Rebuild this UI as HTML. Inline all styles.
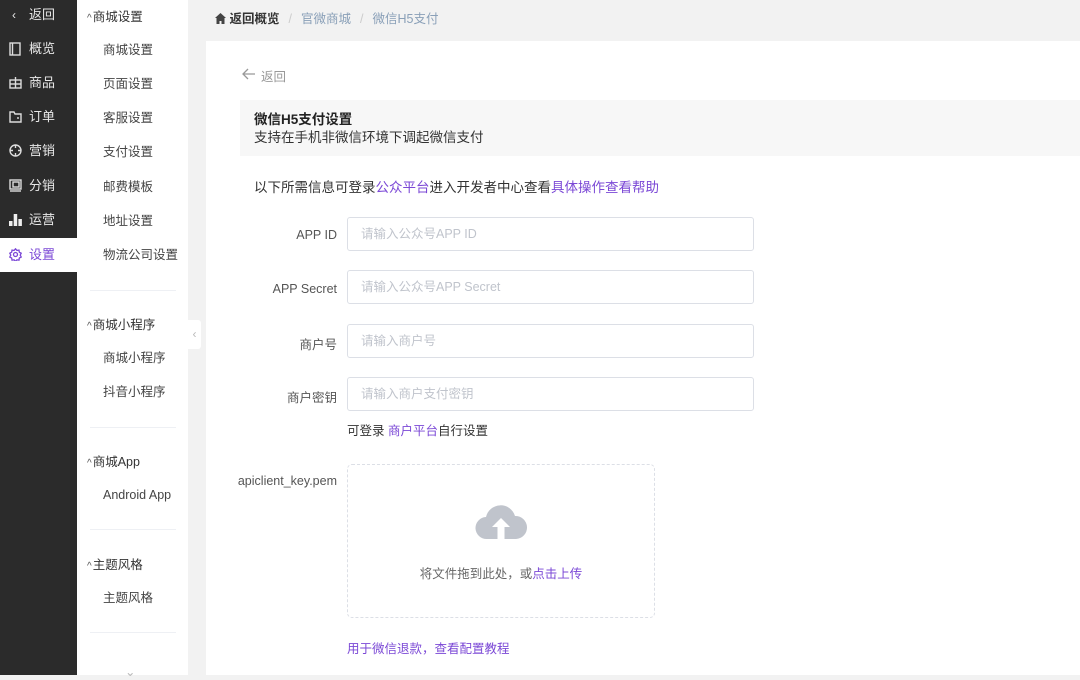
<!DOCTYPE html>
<html><head><meta charset="utf-8"><style>
*{box-sizing:border-box;margin:0;padding:0}
body{width:1080px;height:675px;overflow:hidden;background:#f2f2f2;font-family:"Liberation Sans","Noto Sans CJK SC",sans-serif;font-size:13px;color:#333;position:relative}
.abs{position:absolute}
.side{left:0;top:0;width:77px;height:675px;background:#2b2b2b}
.si{position:absolute;left:0;width:77px;height:34px;color:#e8e8e8;font-size:13px;line-height:34px;padding-left:29px}
.si svg{position:absolute;left:9px;top:10px}
.si.act{background:#fff;color:#7b48d6}
.sub{left:77px;top:0;width:111px;height:675px;background:#fff}
.sh{position:absolute;left:10px;font-size:12.5px;color:#333;line-height:16px}
.sh i{font-style:normal;font-size:10px;color:#555;margin-right:1px}
.sit{position:absolute;left:26px;font-size:12.5px;color:#444;line-height:16px}
.dv{position:absolute;left:13px;width:86px;height:1px;background:#eef0f4}
.purple{color:#7b48d6}
.card{left:206px;top:41px;width:874px;height:634px;background:#fff}
.lbl{position:absolute;right:743px;font-size:12.5px;color:#555;text-align:right}
.inp{position:absolute;left:347px;width:407px;height:34px;border:1px solid #dcdfe6;border-radius:3px;font-size:12.5px;color:#c0c4cc;line-height:32px;padding-left:13px}
</style></head><body>
<div class="abs side">
 <div class="si" style="top:-2px"><span class="abs" style="left:12px;top:0;font-size:12px">‹</span>返回</div>
 <div class="si" style="top:32px"><svg width="12" height="14" viewBox="0 0 12 14" fill="none" stroke="#ddd" stroke-width="1.4"><rect x="1" y="1" width="10" height="12"/><line x1="3.5" y1="1" x2="3.5" y2="13"/></svg>概览</div>
 <div class="si" style="top:66px"><svg width="13" height="13" viewBox="0 0 13 13" fill="none" stroke="#ddd" stroke-width="1.4"><rect x="1" y="4" width="11" height="8"/><line x1="6.5" y1="1" x2="6.5" y2="12"/><line x1="1" y1="8" x2="12" y2="8"/></svg>商品</div>
 <div class="si" style="top:100px"><svg width="13" height="13" viewBox="0 0 13 13" fill="none" stroke="#ddd" stroke-width="1.4"><path d="M1 2h4l1 2h6v8H1z"/><line x1="8" y1="8" x2="10" y2="8"/></svg>订单</div>
 <div class="si" style="top:134px"><svg width="13" height="13" viewBox="0 0 13 13" fill="none" stroke="#ddd" stroke-width="1.4"><circle cx="6.5" cy="6.5" r="5.5"/><path d="M6.5 1v3M6.5 9v3M1 6.5h3M9 6.5h3"/></svg>营销</div>
 <div class="si" style="top:169px"><svg width="13" height="13" viewBox="0 0 13 13" fill="none" stroke="#ddd" stroke-width="1.4"><rect x="1" y="1" width="11" height="9"/><rect x="4" y="3" width="6" height="5"/><path d="M1 12h11"/></svg>分销</div>
 <div class="si" style="top:203px"><svg width="13" height="13" viewBox="0 0 13 13" fill="#eee"><rect x="0" y="8" width="3.5" height="5"/><rect x="4.7" y="1" width="3.5" height="12"/><rect x="9.4" y="6" width="3.5" height="7"/></svg>运营</div>
 <div class="si act" style="top:238px"><svg width="13" height="13" viewBox="0 0 13 13" fill="none" stroke="#7b48d6" stroke-width="1.3"><circle cx="6.5" cy="6.5" r="2"/><path d="M6.5 .8l1.4 1.6 2.1-.3.3 2.1 1.9 1-1 1.9 1 1.9-1.9 1-.3 2.1-2.1-.3-1.4 1.6-1.4-1.6-2.1.3-.3-2.1-1.9-1 1-1.9-1-1.9 1.9-1 .3-2.1 2.1.3z"/></svg>设置</div>
</div>
<div class="abs sub">
 <div class="sh" style="top:9px"><i>^</i>商城设置</div>
 <div class="sit" style="top:42px">商城设置</div>
 <div class="sit" style="top:76px">页面设置</div>
 <div class="sit" style="top:110px">客服设置</div>
 <div class="sit" style="top:144px">支付设置</div>
 <div class="sit" style="top:179px">邮费模板</div>
 <div class="sit" style="top:213px">地址设置</div>
 <div class="sit" style="top:247px">物流公司设置</div>
 <div class="dv" style="top:290px"></div>
 <div class="sh" style="top:317px"><i>^</i>商城小程序</div>
 <div class="sit" style="top:350px">商城小程序</div>
 <div class="sit" style="top:384px">抖音小程序</div>
 <div class="dv" style="top:427px"></div>
 <div class="sh" style="top:454px"><i>^</i>商城App</div>
 <div class="sit" style="top:487px">Android App</div>
 <div class="dv" style="top:529px"></div>
 <div class="sh" style="top:557px"><i>^</i>主题风格</div>
 <div class="sit" style="top:590px">主题风格</div>
 <div class="dv" style="top:632px"></div>
 <div class="sit" style="top:664px;left:48px;color:#bbb">⌄</div>
</div>
<div class="abs" style="left:188px;top:320px;width:13px;height:29px;background:#fff;border-radius:0 3px 3px 0;color:#bbb;font-size:12px;line-height:29px;text-align:center">‹</div>
<div class="abs" style="left:215px;top:11px;font-size:12.5px;line-height:16px"><svg width="11" height="11" viewBox="0 0 11 11" style="vertical-align:-1px"><path d="M5.5 0L0 5h1.5v6h3V8h2v3h3V5H11z" fill="#444"/></svg> <b style="color:#333">返回概览</b><span style="color:#ccc;margin:0 9px">/</span><span style="color:#8aa0b8">官微商城</span><span style="color:#ccc;margin:0 9px">/</span><span style="color:#8aa0b8">微信H5支付</span></div>
<div class="abs card"></div>
<svg class="abs" style="left:242px;top:68px" width="13" height="12" viewBox="0 0 13 12" fill="none" stroke="#999" stroke-width="1.3"><path d="M6 1L1 6l5 5M1 6h12"/></svg>
<div class="abs" style="left:261px;top:66px;color:#999;font-size:12.5px">返回</div>
<div class="abs" style="left:240px;top:100px;width:840px;height:56px;background:#f7f7f7"></div>
<div class="abs" style="left:254px;top:108px;font-size:13.5px;font-weight:bold;color:#222">微信H5支付设置</div>
<div class="abs" style="left:254px;top:126px;font-size:13.5px;color:#333">支持在手机非微信环境下调起微信支付</div>
<div class="abs" style="left:254px;top:176px;font-size:13.5px;color:#333">以下所需信息可登录<span class="purple">公众平台</span>进入开发者中心查看<span class="purple">具体操作查看帮助</span></div>
<div class="lbl" style="top:228px">APP ID</div><div class="inp" style="top:217px">请输入公众号APP ID</div>
<div class="lbl" style="top:282px">APP Secret</div><div class="inp" style="top:270px">请输入公众号APP Secret</div>
<div class="lbl" style="top:334px">商户号</div><div class="inp" style="top:324px">请输入商户号</div>
<div class="lbl" style="top:387px">商户密钥</div><div class="inp" style="top:377px">请输入商户支付密钥</div>
<div class="abs" style="left:347px;top:420px;font-size:12.5px;color:#333">可登录 <span class="purple">商户平台</span>自行设置</div>
<div class="lbl" style="top:474px">apiclient_key.pem</div>
<div class="abs" style="left:347px;top:464px;width:308px;height:154px;border:1px dashed #dcdfe6;border-radius:5px"></div>
<svg class="abs" style="left:475px;top:501px" width="52" height="40" viewBox="0 0 52 40"><path d="M12 38a11 11 0 0 1-1-22 15 15 0 0 1 29-1 11.5 11.5 0 0 1 1 23z" fill="#c0c4cc"/><path d="M26 17l-9 9h5.5v12h7V26H35z" fill="#fff"/></svg>
<div class="abs" style="left:347px;top:563px;width:308px;text-align:center;font-size:12.5px;color:#666">将文件拖到此处，或<span class="purple">点击上传</span></div>
<div class="abs" style="left:347px;top:638px;font-size:12.5px"><span class="purple">用于微信退款，查看配置教程</span></div>
</body></html>
